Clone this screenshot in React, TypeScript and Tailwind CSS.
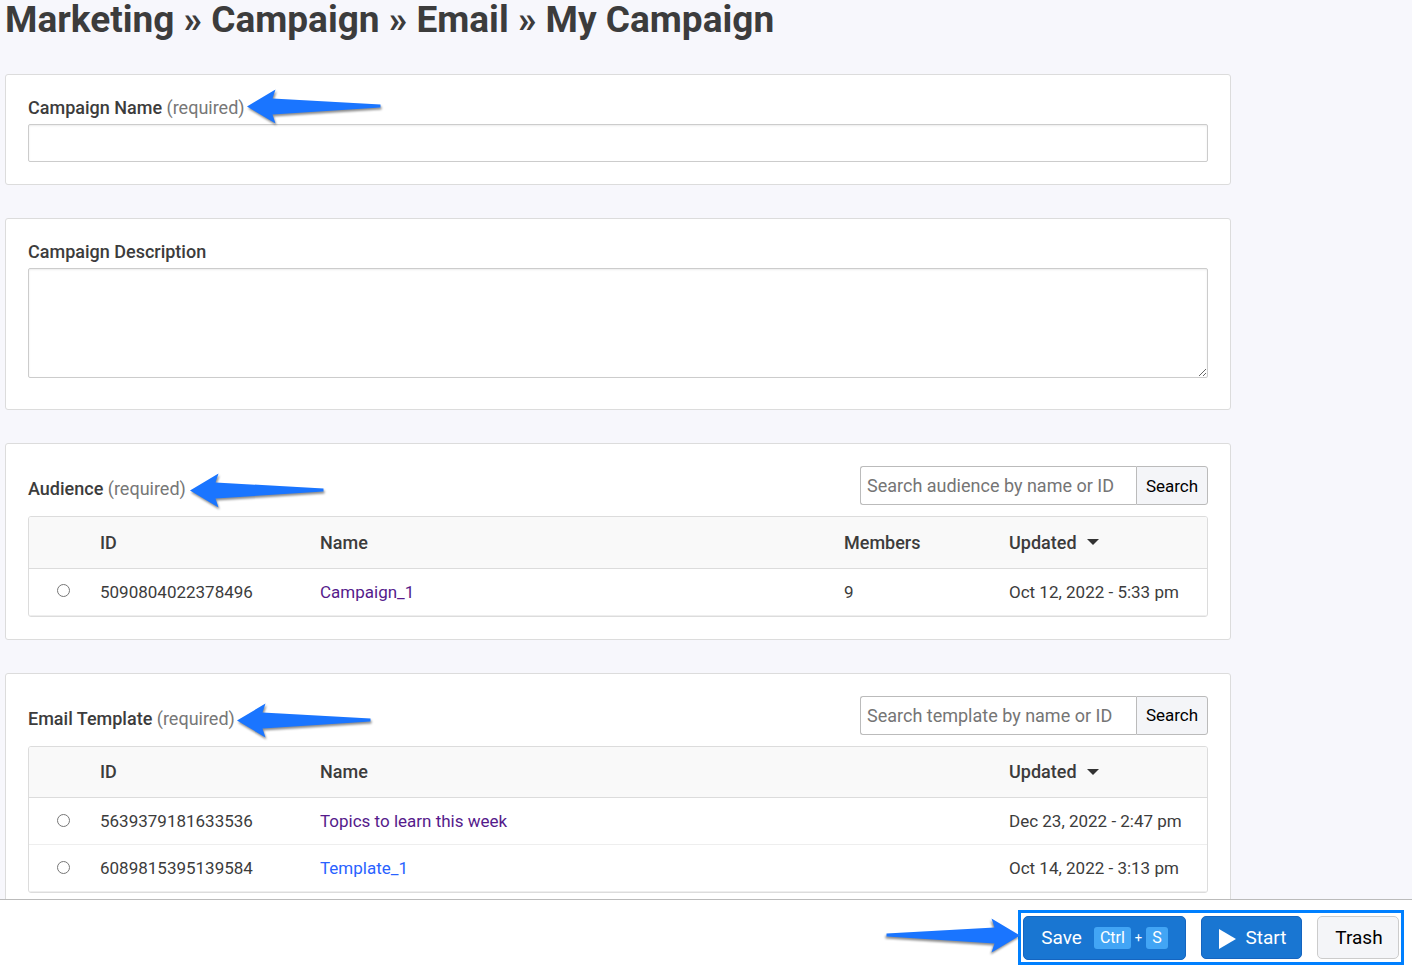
import React from "react";

type Row = { id: string; name: string; visited: boolean; members?: string; updated: string };

const audienceRows: Row[] = [
  { id: "5090804022378496", name: "Campaign_1", visited: true, members: "9", updated: "Oct 12, 2022 - 5:33 pm" },
];

const templateRows: Row[] = [
  { id: "5639379181633536", name: "Topics to learn this week", visited: true, updated: "Dec 23, 2022 - 2:47 pm" },
  { id: "6089815395139584", name: "Template_1", visited: false, updated: "Oct 14, 2022 - 3:13 pm" },
];

function Arrow({ className = "" }: { className?: string }) {
  return (
    <svg
      aria-hidden="true"
      width="136"
      height="36"
      viewBox="0 0 136 36"
      className={`shrink-0 overflow-visible drop-shadow-[1px_2px_1px_rgba(0,0,0,0.45)] ${className}`}
    >
      <path d="M0 17.5 28.5 0.5 25.5 9.5 133.5 15.5V18.5L25.5 25.5 28.5 34.5Z" fill="#1a75ff" />
    </svg>
  );
}

function Card({ children, className = "pb-[22px]" }: { children: React.ReactNode; className?: string }) {
  return (
    <section className={`rounded-[3px] border border-[#dcdcdc] bg-white px-[22px] pt-[22px] ${className}`}>
      {children}
    </section>
  );
}

function Required() {
  return <span className="font-normal text-[#777]">(required)</span>;
}

function Picker({
  title,
  name,
  placeholder,
  rows,
  showMembers = false,
  arrowClass,
}: {
  title: string;
  name: string;
  placeholder: string;
  rows: Row[];
  showMembers?: boolean;
  arrowClass: string;
}) {
  return (
    <Card>
      <div className="mb-[11px] flex h-[39px] items-start justify-between">
        <div className="flex items-start">
          <h2 className="pt-[9px] text-[18px] leading-[27px] font-medium">
            {title} <Required />
          </h2>
          <Arrow className={`mt-[7px] ${arrowClass}`} />
        </div>
        <form className="flex h-[39px] w-[348px]" onSubmit={(e) => e.preventDefault()}>
          <input
            type="search"
            aria-label={placeholder}
            placeholder={placeholder}
            className="min-w-0 flex-1 rounded-l-[3px] border border-r-0 border-[#bbb] bg-white px-1.5 text-[18px] placeholder:text-[#757575]"
          />
          <button
            type="submit"
            className="w-[72px] rounded-r-[3px] border border-[#bbb] bg-[#f4f5f8] pt-0.5 text-[17px] text-black"
          >
            Search
          </button>
        </form>
      </div>
      <div className="overflow-hidden rounded-[3px] border border-[#dcdcdc]">
        <table className="w-full table-fixed border-collapse text-left text-[17px]">
          <colgroup>
            <col className="w-[71px]" />
            <col className="w-[220px]" />
            <col />
            {showMembers && <col className="w-[165px]" />}
            <col className="w-[198px]" />
          </colgroup>
          <thead>
            <tr className="h-[51px] border-b border-[#dcdcdc] bg-[#f9f9f9] text-[18px] [&>th]:font-medium">
              <th aria-label="Selected" />
              <th>ID</th>
              <th>Name</th>
              {showMembers && <th>Members</th>}
              <th aria-sort="descending">
                <span className="flex items-center gap-2.5">
                  Updated
                  <svg aria-hidden="true" width="12" height="6" viewBox="0 0 12 6">
                    <path d="M0 0H12L6 6Z" fill="#333" />
                  </svg>
                </span>
              </th>
            </tr>
          </thead>
          <tbody>
            {rows.map((r) => (
              <tr key={r.id} className="h-[47px] border-b border-[#eee] [&>td]:pt-0.5">
                <td>
                  <div className="flex justify-center pr-0.5 pb-1">
                    <input type="radio" name={name} aria-label={r.name} className="size-[13px]" />
                  </div>
                </td>
                <td>{r.id}</td>
                <td>
                  <a href="#" className={r.visited ? "text-[#551a8b]" : "text-[#2962ff]"}>
                    {r.name}
                  </a>
                </td>
                {showMembers && <td>{r.members}</td>}
                <td className="whitespace-nowrap">{r.updated}</td>
              </tr>
            ))}
          </tbody>
        </table>
      </div>
    </Card>
  );
}

export default function App() {
  return (
    <div className="flex h-screen flex-col bg-[#f7f7fc] font-[Roboto,sans-serif] text-[#3c3c3c]">
      <main className="min-h-0 flex-1 overflow-y-auto px-[5px] [scrollbar-width:none]">
        <h1 className="mb-[34px] text-[37px] leading-10 font-bold">
          Marketing » Campaign » Email » My Campaign
        </h1>
        <div className="flex max-w-[1226px] flex-col gap-[33px] pb-8">
          <Card>
            <div className="flex h-[27px] items-start">
              <label htmlFor="name" className="text-[18px] leading-[22px] font-medium">
                Campaign Name <Required />
              </label>
              <Arrow className="-mt-2 ml-0.5" />
            </div>
            <input
              id="name"
              type="text"
              required
              className="block h-[38px] w-full rounded-[2px] border border-[#ccc] bg-white px-1.5 text-[18px] shadow-[inset_0_1px_2px_rgba(0,0,0,0.08)]"
            />
          </Card>
          <Card className="pb-[31px]">
            <label htmlFor="description" className="block h-[27px] text-[18px] leading-[22px] font-medium">
              Campaign Description
            </label>
            <textarea
              id="description"
              className="block h-[110px] w-full rounded-[2px] border border-[#ccc] bg-white p-1.5 text-[18px] shadow-[inset_0_1px_2px_rgba(0,0,0,0.08)]"
            />
          </Card>
          <Picker
            title="Audience"
            name="audience"
            placeholder="Search audience by name or ID"
            rows={audienceRows}
            showMembers
            arrowClass="ml-1"
          />
          <Picker
            title="Email Template"
            name="template"
            placeholder="Search template by name or ID"
            rows={templateRows}
            arrowClass="ml-0.5"
          />
        </div>
      </main>
      <footer className="flex items-start justify-end border-t border-[#bbb] bg-white pt-2.5 pr-2 pb-[5px]">
        <Arrow className="mt-2 -mr-0.5 -scale-x-100" />
        <div className="flex items-start gap-[15px] border-[3px] border-[#0080ff] px-0.5 pt-[3px] pb-0.5">
          <button
            type="button"
            className="flex h-[44px] w-[163px] items-center justify-center rounded-[5px] border border-[#1565c0] bg-[#1976d2] text-[19px] text-white"
          >
            <span className="mr-3">Save</span>
            <kbd className="rounded-[3px] bg-[#42a5f5] px-1.5 font-[Roboto,sans-serif] text-[16px] leading-[22px]">Ctrl</kbd>
            <span className="mx-1 text-[13px]">+</span>
            <kbd className="rounded-[3px] bg-[#42a5f5] px-1.5 font-[Roboto,sans-serif] text-[16px] leading-[22px]">S</kbd>
          </button>
          <button
            type="button"
            className="flex h-[43px] w-[101px] items-center justify-center gap-2.5 rounded-[5px] border border-[#1565c0] bg-[#1976d2] pt-0.5 pl-0.5 text-[19px] text-white"
          >
            <svg aria-hidden="true" width="17" height="20" viewBox="0 0 17 20">
              <path d="M0 0 17 10 0 20Z" fill="#fff" />
            </svg>
            Start
          </button>
          <button
            type="button"
            className="h-[43px] w-[82px] rounded-[5px] border border-[#ccc] bg-[#f4f5f8] pt-0.5 pl-0.5 text-[19px] text-black"
          >
            Trash
          </button>
        </div>
      </footer>
    </div>
  );
}
